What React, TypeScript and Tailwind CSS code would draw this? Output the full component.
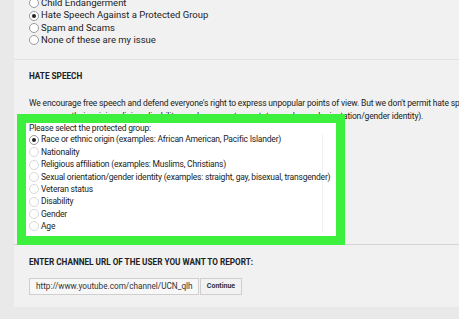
import React from "react";

const Radio = ({ checked = false, faint = false }: { checked?: boolean; faint?: boolean }) => (
  <span
    className={`inline-flex h-[10px] w-[10px] shrink-0 items-center justify-center rounded-full border bg-white ${
      faint ? "border-[#d8d8d8]" : "border-[#9a9a9a]"
    }`}
  >
    {checked && <span className="h-[4px] w-[4px] rounded-full bg-[#222]" />}
  </span>
);

const Item = ({ label, checked = false, faint = false }: { label: string; checked?: boolean; faint?: boolean }) => (
  <div className="flex h-[12.4px] items-center gap-[2px] whitespace-nowrap">
    <Radio checked={checked} faint={faint} />
    <span>{label}</span>
  </div>
);

export default function App() {
  const groups = [
    "Race or ethnic origin (examples: African American, Pacific Islander)",
    "Nationality",
    "Religious affiliation (examples: Muslims, Christians)",
    "Sexual orientation/gender identity (examples: straight, gay, bisexual, transgender)",
    "Veteran status",
    "Disability",
    "Gender",
    "Age",
  ];
  return (
    <div
      className="flex h-[319px] w-[459px] overflow-hidden bg-[#e9e9e9] text-[#222]"
      style={{ fontFamily: "Roboto, 'Liberation Sans', sans-serif" }}
    >
      <div className="w-[14px] shrink-0" />
      <div className="flex min-w-0 flex-1 flex-col">
        <div className="flex flex-col bg-[#f1f1f1]">
          {/* top section */}
          <div className="-mt-[3px] flex flex-col pb-[12px] pl-[15px] text-[9.5px]">
            <Item label="Child Endangerment" />
            <Item label="Hate Speech Against a Protected Group" checked />
            <Item label="Spam and Scams" />
            <Item label="None of these are my issue" />
          </div>
          <div className="h-[1px] bg-[#e2e2e2]" />
          {/* hate speech section */}
          <div className="flex flex-col pl-[15px] pt-[10px]">
            <div className="h-[12px] text-[8.2px] leading-[12px] font-bold">HATE SPEECH</div>
            <div className="mt-[15px] whitespace-nowrap text-[8.5px] leading-[13px] tracking-[-0.15px]">
              <div>We encourage free speech and defend everyone's right to express unpopular points of view. But we don't permit hate speech</div>
              <div>on race or ethnic origin, religion, disability, gender, age, veteran status, and sexual orientation/gender identity).</div>
            </div>
            <div className="relative z-10 -ml-[12px] -mt-[9px] w-[328px] border-[9px] border-[#3df03d]">
              <div className="flex h-[113px] flex-col bg-white pl-[3px] text-[8.5px] tracking-[-0.2px]">
                <div className="h-[11px] leading-[11px]">Please select the protected group:</div>
                <div className="flex w-[294px] flex-col border-r border-[#f2f2f2]">
                  {groups.map((g, i) => (
                    <Item key={g} label={g} checked={i === 0} faint={i !== 0} />
                  ))}
                </div>
              </div>
            </div>
          </div>
          <div className="-mt-[1px] h-[1px] bg-[#d4d4d4]" />
          {/* url section */}
          <div className="flex flex-col pb-[12px] pl-[15px] pt-[11px]">
            <div className="h-[12px] text-[8.2px] leading-[12px] font-bold">
              ENTER CHANNEL URL OF THE USER YOU WANT TO REPORT:
            </div>
            <div className="mt-[10px] flex h-[17px] items-stretch gap-[1px]">
              <div className="flex w-[170px] items-center border border-[#cfcfcf] bg-[#f7f7f7] pl-[6px] text-[8.2px] text-[#333]">
                http://www.youtube.com/channel/UCN_qlh
              </div>
              <div className="flex w-[42px] items-center justify-center border border-[#cfcfcf] bg-[#f2f2f2] text-[7px] font-bold text-[#333]">
                Continue
              </div>
            </div>
          </div>
        </div>
      </div>
    </div>
  );
}
